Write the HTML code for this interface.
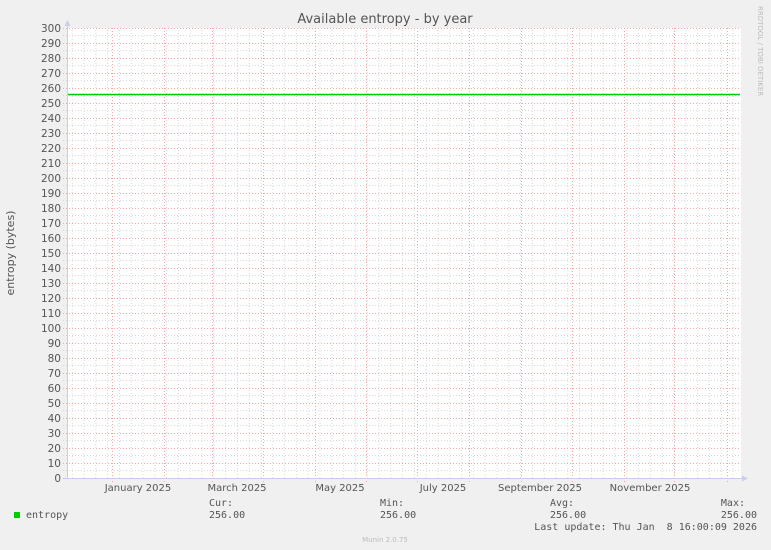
<!DOCTYPE html>
<html><head><meta charset="utf-8"><style>
html,body{margin:0;padding:0;background:#f0f0f0;}
svg{display:block;}
text{font-family:"DejaVu Sans",sans-serif;}
.y{font-size:10.5px;fill:#555;text-anchor:end;}
.x{font-size:10px;fill:#555;text-anchor:middle;}
.m text{font-family:"DejaVu Sans Mono","Liberation Mono",monospace;font-size:10px;fill:#555;}
</style></head><body>
<svg width="771" height="550" viewBox="0 0 771 550" xmlns="http://www.w3.org/2000/svg">
<defs>
<pattern id="hg" x="0" y="28" width="771" height="15" patternUnits="userSpaceOnUse">
<line x1="0" y1="7.5" x2="771" y2="7.5" stroke="#d8d8d8" stroke-width="1" stroke-dasharray="1,2"/>
<line x1="0" y1="0.5" x2="771" y2="0.5" stroke="#f4a8a8" stroke-width="1" stroke-dasharray="1,2"/>
</pattern>
<pattern id="vg" x="71.7" y="0" width="11.8" height="550" patternUnits="userSpaceOnUse">
<line x1="0.5" y1="0" x2="0.5" y2="550" stroke="#d8d8d8" stroke-width="1" stroke-dasharray="1,2"/>
</pattern>
</defs>
<rect x="0" y="0" width="771" height="550" fill="#f0f0f0"/>
<rect x="67" y="28" width="674" height="450" fill="#fff"/>
<rect x="68" y="28" width="673" height="450" fill="url(#vg)"/>
<rect x="62" y="28" width="679" height="451" fill="url(#hg)"/>
<g stroke="#f4a8a8" stroke-width="1" stroke-dasharray="1,2">
<line x1="112.5" y1="28" x2="112.5" y2="482"/><line x1="164.5" y1="28" x2="164.5" y2="482"/>
<line x1="212.5" y1="28" x2="212.5" y2="482"/><line x1="263.5" y1="28" x2="263.5" y2="482"/>
<line x1="315.5" y1="28" x2="315.5" y2="482"/><line x1="366.5" y1="28" x2="366.5" y2="482"/>
<line x1="417.5" y1="28" x2="417.5" y2="482"/><line x1="469.5" y1="28" x2="469.5" y2="482"/>
<line x1="521.5" y1="28" x2="521.5" y2="482"/><line x1="572.5" y1="28" x2="572.5" y2="482"/>
<line x1="624.5" y1="28" x2="624.5" y2="482"/><line x1="674.5" y1="28" x2="674.5" y2="482"/>
<line x1="727.5" y1="28" x2="727.5" y2="482"/>
</g>
<line x1="67" y1="94.5" x2="740" y2="94.5" stroke="#00cc00" stroke-width="1.5"/>
<line x1="67.5" y1="24" x2="67.5" y2="479" stroke="#ccccf0" stroke-width="1"/>
<line x1="64" y1="478.5" x2="744" y2="478.5" stroke="#ccccf0" stroke-width="1"/>
<polygon points="64.5,26 67.5,20 70.5,26" fill="#ccccf0"/>
<polygon points="742,475.5 748,478.5 742,481.5" fill="#ccccf0"/>
<text x="385" y="23" font-size="13" fill="#555" text-anchor="middle">Available entropy - by year</text>
<text transform="translate(14,253) rotate(-90)" font-size="11" fill="#555" text-anchor="middle">entropy (bytes)</text>
<text transform="translate(758,6) rotate(90)" font-size="7" fill="#bbb">RRDTOOL / TOBI OETIKER</text>
<g class="y">
<text x="61" y="32">300</text><text x="61" y="47">290</text><text x="61" y="62">280</text><text x="61" y="77">270</text>
<text x="61" y="92">260</text><text x="61" y="107">250</text><text x="61" y="122">240</text><text x="61" y="137">230</text>
<text x="61" y="152">220</text><text x="61" y="167">210</text><text x="61" y="182">200</text><text x="61" y="197">190</text>
<text x="61" y="212">180</text><text x="61" y="227">170</text><text x="61" y="242">160</text><text x="61" y="257">150</text>
<text x="61" y="272">140</text><text x="61" y="287">130</text><text x="61" y="302">120</text><text x="61" y="317">110</text>
<text x="61" y="332">100</text><text x="61" y="347">90</text><text x="61" y="362">80</text><text x="61" y="377">70</text>
<text x="61" y="392">60</text><text x="61" y="407">50</text><text x="61" y="422">40</text><text x="61" y="437">30</text>
<text x="61" y="452">20</text><text x="61" y="467">10</text><text x="61" y="482">0</text>
</g>
<g class="x">
<text x="138" y="491">January 2025</text><text x="237" y="491">March 2025</text>
<text x="340" y="491">May 2025</text><text x="443" y="491">July 2025</text>
<text x="540" y="491">September 2025</text><text x="650" y="491">November 2025</text>
</g>
<rect x="14" y="512" width="6" height="6" fill="#00cc00"/>
<g class="m">
<text x="26" y="518">entropy</text>
<text x="209" y="506">Cur:</text><text x="209" y="518">256.00</text>
<text x="380" y="506">Min:</text><text x="380" y="518">256.00</text>
<text x="550" y="506">Avg:</text><text x="550" y="518">256.00</text>
<text x="745" y="506" text-anchor="end">Max:</text><text x="757" y="518" text-anchor="end">256.00</text>
<text x="757" y="530" text-anchor="end" xml:space="preserve">Last update: Thu Jan  8 16:00:09 2026</text>
</g>
<text x="385" y="542" font-size="7" fill="#bbb" text-anchor="middle">Munin 2.0.75</text>
</svg>
</body></html>
